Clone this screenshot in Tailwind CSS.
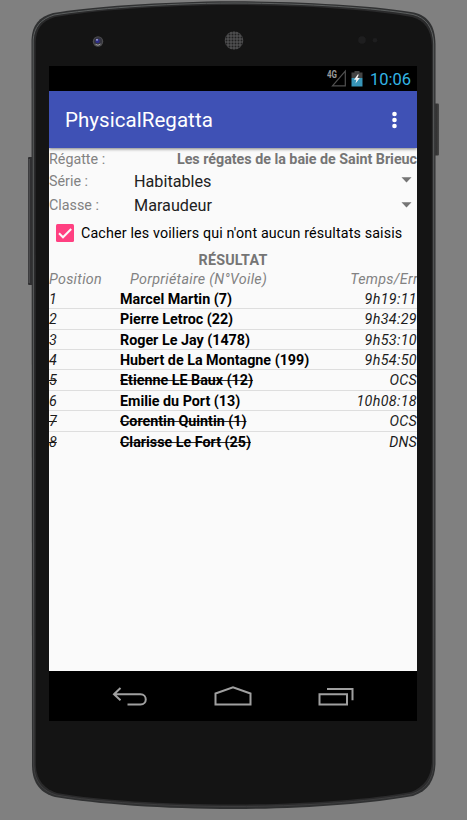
<!DOCTYPE html>
<html lang="fr">
<head>
<meta charset="utf-8">
<title>PhysicalRegatta</title>
<script src="https://cdn.jsdelivr.net/npm/@tailwindcss/browser@4"></script>
</head>
<body class="bg-[#808080] overflow-hidden">
<div class="relative w-[467px] h-[820px] overflow-hidden font-['Roboto',sans-serif]">
  <!-- Phone shell -->
  <svg class="absolute inset-0" width="467" height="820" viewBox="0 0 467 820">
    <defs>
      <linearGradient id="btn" x1="0" x2="1" y1="0" y2="0"><stop offset="0" stop-color="#555"/><stop offset=".4" stop-color="#303030"/><stop offset="1" stop-color="#444"/></linearGradient>
      <linearGradient id="rim" x1="0" x2="0" y1="0" y2="1"><stop offset="0" stop-color="#5c5f5f"/><stop offset=".7" stop-color="#555657"/><stop offset="1" stop-color="#3c3c3d"/></linearGradient>
      <pattern id="mesh" width="3" height="3" patternUnits="userSpaceOnUse"><rect width="3" height="3" fill="#4e4e50"/><circle cx="1.5" cy="1.5" r="1" fill="#202020"/></pattern>
    </defs>
    <rect x="28" y="157" width="6" height="128" rx="1" fill="#303032"/>
    <rect x="28.5" y="159" width="1.5" height="124" fill="#4a4a4c"/>
    <rect x="434" y="103.500" width="5" height="52" rx="1" fill="url(#btn)"/>
    <path d="M31.500 40 C32 25 39 17 53 13 C88 7 160 1.500 234 1.200 C308 1.500 378 6 414 12.500 C428 16 435 25 435.500 44 V764 C435 780 428 791 413 796 C368 804 300 809 234 809 C164 809 96 804 55 797 C41 793 32.500 784 32 766 Z" fill="#303132"/>
    <path d="M33.200 40 C34 27 41 19 54 15 C90 9 160 3.300 234 3 C308 3.300 377 8 413 14.500 C426 18 433 27 433.700 44 V764 C433 779 426 789 412 794 C368 802 300 806.500 234 806.500 C164 806.500 96 802 56 795 C43 791 34.500 782 33.800 766 Z" fill="#2a2a2b" stroke="url(#rim)" stroke-width="1"/>
    <path d="M35.700 42 C36 29 42 21 55 17 C91 11 160 5.200 234 5 C308 5.200 376 10 412 17 C424 20 431 29 431.800 45 V763 C431 777 424 787 411 792 C368 800 300 804.500 234 804.500 C164 804.500 96 800 57 793 C45 789 36.500 781 35.800 765 Z" fill="#141414"/>
    <circle cx="98" cy="41.500" r="5.200" fill="#4c4c4e"/><circle cx="98" cy="41.300" r="4" fill="#34343e"/><circle cx="97.600" cy="41" r="2.200" fill="#2d2d86"/><circle cx="97" cy="39.800" r=".9" fill="#b7bbdf"/><path d="M95.500 44.300q2.500 2 5-.3" fill="none" stroke="#a0a0a0"/>
    <circle cx="234" cy="40.500" r="9.300" fill="url(#mesh)"/>
    <circle cx="362" cy="40" r="3.800" fill="#1e1e1f"/><circle cx="375" cy="40.300" r="2.300" fill="#1e1e1f"/>
  </svg>

  <!-- Screen -->
  <div class="relative ml-[49px] mt-[66px] w-[368px] h-[655px] flex flex-col bg-[#fafafa] overflow-hidden">
    <div class="h-[25px] shrink-0 bg-black flex items-center justify-end pr-[6px]">
      <svg class="mr-[5px] mb-px overflow-visible" width="20" height="18" viewBox="0 0 20 18"><text x="1" y="9" font-family="Roboto" font-weight="700" font-size="10" textLength="10" lengthAdjust="spacingAndGlyphs" fill="#9a9a9a">4G</text><path d="M6.500 16.800H19.300V2.200Z" fill="none" stroke="#505050" stroke-width="1.200"/></svg>
      <svg class="mr-[7px] mb-px" width="12" height="17" viewBox="0 0 12 17"><path d="M.5 2.500h3V1h5v1.500h3V8H.5z" fill="#444"/><path d="M.5 8h11v8.500H.5z" fill="#3795b8"/><path d="M6.700 4.500 3 9.800h2.400L4.500 13.500 8.800 8H6.400L7.800 4.500z" fill="#f4f4f4"/></svg>
      <span class="text-[16.5px] leading-[23px] pt-[2px] text-[#33b5e5] w-[41px] whitespace-nowrap">10:06</span>
    </div>
    <header class="h-[57px] shrink-0 bg-[#3f51b5] flex items-center justify-between pl-4 pr-[20px] shadow-[0_1px_3px_rgba(0,0,0,.5)] z-10">
      <h1 class="text-[20.5px] text-white tracking-[0.05px] pt-[2px]">PhysicalRegatta</h1>
      <svg width="5" height="18" viewBox="0 0 5 18" fill="#fff"><circle cx="2.500" cy="3" r="2.300"/><circle cx="2.500" cy="9" r="2.300"/><circle cx="2.500" cy="15" r="2.300"/></svg>
    </header>
    <main class="flex-1 flex flex-col text-[14.3px] text-[#757575] whitespace-nowrap">
      <div class="h-[21px] leading-[22px] flex justify-between"><span class="text-[#828282]">Régatte :</span><b class="font-bold tracking-[-0.02px]">Les régates de la baie de Saint Brieuc</b></div>
      <div class="h-[24px] leading-[24px] flex items-center"><span class="w-[85px] text-[#828282]">Série :</span><span class="flex-1 text-[16.2px] text-[#212121] pt-px">Habitables</span><svg class="mr-[5px] mb-[3px]" width="11" height="6" viewBox="0 0 11 6"><path d="M.5.300h10L5.500 5.500z" fill="#757575"/></svg></div>
      <div class="h-[25px] leading-[25px] flex items-center"><span class="w-[85px] text-[#828282]">Classe :</span><span class="flex-1 text-[16.2px] text-[#212121]">Maraudeur</span><svg class="mr-[5px] mb-[2px]" width="11" height="6" viewBox="0 0 11 6"><path d="M.5.300h10L5.500 5.500z" fill="#757575"/></svg></div>
      <div class="h-[31px] flex items-center pl-[7px] text-black"><svg class="mr-[7px] mb-px" width="18" height="18" viewBox="0 0 18 18"><rect width="18" height="18" rx="1.500" fill="#ff4081"/><path d="m3 9.300 4 4L15.200 5" fill="none" stroke="#fafafa" stroke-width="2"/></svg><span class="tracking-[0.14px]">Cacher les voiliers qui n'ont aucun résultats saisis</span></div>
      <div class="h-[20px] leading-[20px] text-center font-bold mt-[1px] tracking-[0.2px]">RÉSULTAT</div>
      <div class="h-[18px] leading-[18px] flex italic tracking-[0.3px] text-[#828282]"><span class="w-[81px]">Position</span><span class="flex-1">Porpriétaire (N°Voile)</span><span class="-mr-px">Temps/Err</span></div>
      <ol class="text-black pt-[0.8px]">
        <li class="flex h-[20.4px] leading-[21px] border-b border-[#dedede]"><i class="w-[71px] text-[#1c1c1c]">1</i><b class="flex-1 font-bold">Marcel Martin (7)</b><i class="tracking-[0.35px] text-[#1c1c1c]">9h19:11</i></li>
        <li class="flex h-[20.4px] leading-[21px] border-b border-[#dedede]"><i class="w-[71px] text-[#1c1c1c]">2</i><b class="flex-1 font-bold">Pierre Letroc (22)</b><i class="tracking-[0.35px] text-[#1c1c1c]">9h34:29</i></li>
        <li class="flex h-[20.4px] leading-[21px] border-b border-[#dedede]"><i class="w-[71px] text-[#1c1c1c]">3</i><b class="flex-1 font-bold">Roger Le Jay (1478)</b><i class="tracking-[0.35px] text-[#1c1c1c]">9h53:10</i></li>
        <li class="flex h-[20.4px] leading-[21px] border-b border-[#dedede]"><i class="w-[71px] text-[#1c1c1c]">4</i><b class="flex-1 font-bold">Hubert de La Montagne (199)</b><i class="tracking-[0.35px] text-[#1c1c1c]">9h54:50</i></li>
        <li class="flex h-[20.4px] leading-[21px] border-b border-[#dedede]"><i class="w-[71px] text-[#1c1c1c] line-through">5</i><b class="flex-1 font-bold line-through decoration-1 decoration-black/80">Etienne LE Baux (12)</b><i class="tracking-[0.2px] text-[#1c1c1c]">OCS</i></li>
        <li class="flex h-[20.4px] leading-[21px] border-b border-[#dedede]"><i class="w-[71px] text-[#1c1c1c]">6</i><b class="flex-1 font-bold">Emilie du Port (13)</b><i class="tracking-[0.35px] text-[#1c1c1c]">10h08:18</i></li>
        <li class="flex h-[20.4px] leading-[21px] border-b border-[#dedede]"><i class="w-[71px] text-[#1c1c1c] line-through">7</i><b class="flex-1 font-bold line-through decoration-1 decoration-black/80">Corentin Quintin (1)</b><i class="tracking-[0.2px] text-[#1c1c1c]">OCS</i></li>
        <li class="flex h-[20.4px] leading-[21px]"><i class="w-[71px] text-[#1c1c1c] line-through">8</i><b class="flex-1 font-bold line-through decoration-1 decoration-black/80">Clarisse Le Fort (25)</b><i class="tracking-[0.2px] text-[#1c1c1c]">DNS</i></li>
      </ol>
    </main>
    <nav class="h-[50px] shrink-0 bg-black flex items-center justify-between pl-[63px] pr-[63px]">
      <svg width="36" height="22" viewBox="0 0 36 22" fill="none" stroke="#a0a0a0" stroke-width="2"><path d="M8.500 3 2 9.300l6.500 6M2 9.300h26.500c7 0 7 10.200 0 10.200H15.500"/></svg>
      <svg class="-ml-px" width="38" height="22" viewBox="0 0 38 22" fill="none" stroke="#a0a0a0" stroke-width="2"><path d="M1.500 19.500V8.500L19 2.200 36.500 8.500v11z"/></svg>
      <svg width="36" height="22" viewBox="0 0 36 22" fill="none" stroke="#a0a0a0" stroke-width="2"><path d="M1.500 9.200h27.500v10.300H1.500zM9 4h25.500v11.300"/></svg>
    </nav>
  </div>
</div>
</body>
</html>
